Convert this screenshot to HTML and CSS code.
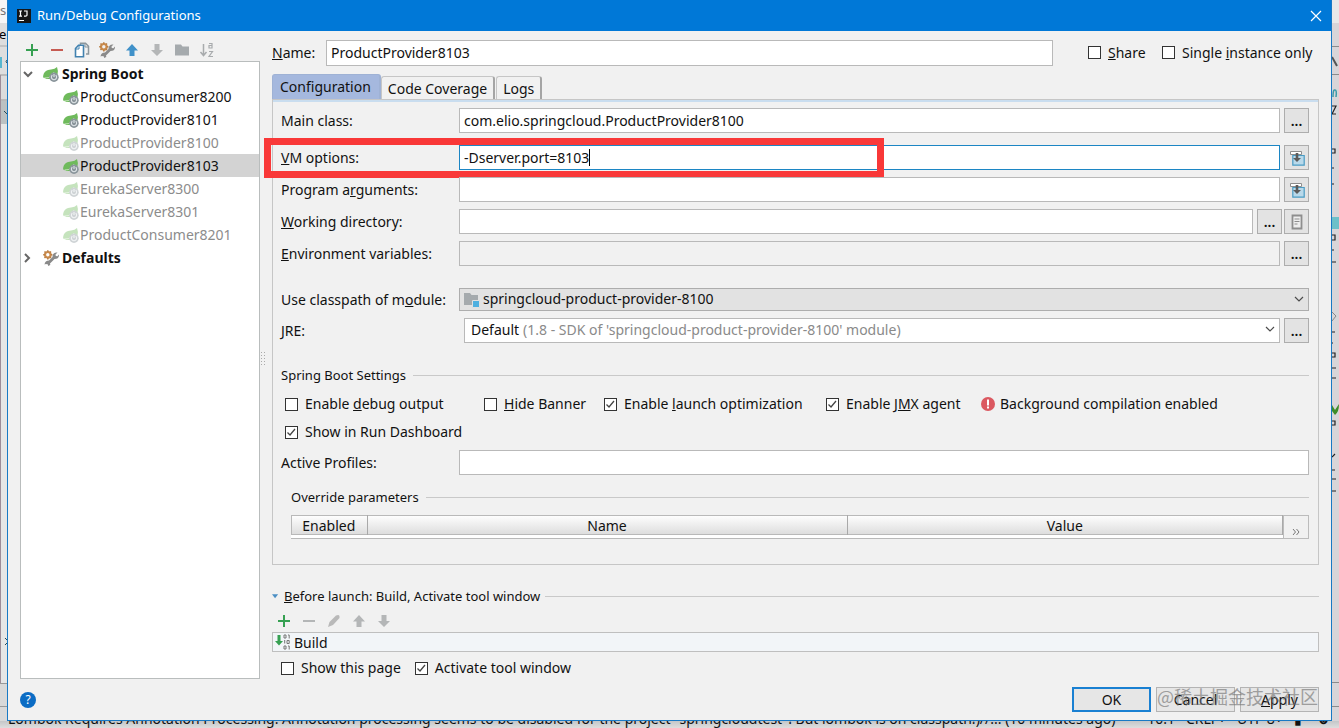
FILE: index.html
```html
<!DOCTYPE html>
<html lang="en">
<head>
<meta charset="utf-8">
<title>Run/Debug Configurations</title>
<link rel="stylesheet" href="styles.css">
</head>
<body>
<svg class="defs" aria-hidden="true">
  <defs>
    <symbol id="i-plus" viewBox="0 0 16 16"><path d="M7 2h2v5h5v2H9v5H7V9H2V7h5z" fill="#36a052"/></symbol>
    <symbol id="i-minus" viewBox="0 0 16 16"><path d="M2 7h12v2H2z" fill="currentColor"/></symbol>
    <symbol id="i-copy" viewBox="0 0 16 16"><path d="M6.500 3V1.200h5l3 3V12H12" fill="none" stroke="#8c979d" stroke-width="1.500"/><path d="M11 1.500v3.500h3.500" fill="none" stroke="#8c979d"/><path d="M1.500 6.500L4.500 3.200h5v11.600h-8z" fill="#fff" stroke="#4282b0" stroke-width="1.600"/><path d="M2 7h3V3.500" fill="none" stroke="#4282b0"/></symbol>
    <symbol id="i-tools" viewBox="0 0 16 16"><path d="M14.500 2.500L12.500 4.500l.3 1.500 1.600.2 1.600-1.700q.3 4.500-4.500 4.500L7 13.500l.3 1.500L5 16v-1.500L3 14l-1.500.5Q2 10.500 6 10.500L9.500 7Q9.500 2 14.500 2.500z" fill="#8a8a8a"/><circle cx="4.800" cy="4.800" r="2.800" fill="none" stroke="#c98a4b" stroke-width="2.200"/><path d="M4.800.2v1.600M4.800 7.800v1.600M.2 4.800h1.600M7.800 4.800h1.600M1.500 1.500l1 1M7 7l1 1M8 1.500l-1 1M1.500 8l1-1" stroke="#b87d43" stroke-width="1.500"/></symbol>
    <symbol id="i-up" viewBox="0 0 16 16"><path d="M8 2l6 6.500h-3.500V14h-5V8.500H2z" fill="currentColor"/></symbol>
    <symbol id="i-down" viewBox="0 0 16 16"><path d="M8 14L2 8h3.500V2h5v6H14z" fill="currentColor"/></symbol>
    <symbol id="i-folder" viewBox="0 0 16 16"><path d="M1 2.500h6l1.500 2H15v9H1z" fill="#a5aaad"/></symbol>
    <symbol id="i-sort" viewBox="0 0 16 16"><path d="M4.500 2v11M1.500 10l3 3.500 3-3.500" fill="none" stroke="#a8abad" stroke-width="1.500"/><path d="M10 1.500h3V6h-3V3.500h3M10 9.500h3.500l-3.500 5h4" fill="none" stroke="#a8abad" stroke-width="1.200"/></symbol>
    <symbol id="i-pencil" viewBox="0 0 16 16"><path d="M2 14l1.500-5L10 2.500Q14 .5 13.500 5L7 12z" fill="#b9b9b9"/></symbol>
    <symbol id="i-boot" viewBox="0 0 16 16"><path d="M0 11.500C.5 5 4 4 8 3.500q4-.5 6-2.500 1.500 4 .5 7.500Q11 13.500 5 13H1q2 0 2-1z" fill="#6fba5c"/><path d="M2 12q7 0 9-6" fill="none" stroke="#c4e5b8"/><circle cx="11" cy="11.200" r="4.700" fill="#8a959b"/><path d="M9.300 9.200a2.600 2.600 0 1 0 3.400 0M11 8v3" fill="none" stroke="#dfe5e8" stroke-width="1.100"/></symbol>
    <symbol id="i-insert" viewBox="0 0 16 16"><path d="M3.800 5.500h11.400v9.700H3.800z" fill="#b9d9ea" stroke="#4a9cc4" stroke-width="1.200"/><path d="M1.500 1.500h11v3h-11z" fill="#fff" stroke="#8d8d8d"/><path d="M8 12L4 8h2.700V3h2.600v5H12z" fill="#5b5b5b"/></symbol>
    <symbol id="i-doc" viewBox="0 0 16 16"><path d="M3.500 1.500h9v13h-9z" fill="#eee" stroke="#8e8e8e" stroke-width="1.800"/><path d="M5.500 5h5M5.500 7.500h5M5.500 10h3" stroke="#8e8e8e"/></symbol>
    <symbol id="i-chev" viewBox="0 0 16 16"><path d="M4 6l4 4 4-4" fill="none" stroke="#4c4c4c" stroke-width="1.200"/></symbol>
  </defs>
</svg>

<div class="desktop">
  <svg class="edge" aria-hidden="true">
    <path d="M0 0h7v23H0z" fill="#f6f6f6"/><path d="M0 23h7v52H0z" fill="#dedede"/><path d="M0 46h7" stroke="#aaa"/>
    <path d="M0 75h7v25H0z" fill="#dcdcdc"/><path d="M0 75h7M0 100h7" stroke="#999"/><path d="M0 101h7v23H0z" fill="#bcc1c2"/>
    <path d="M.5 75v608" stroke="#9d8c98"/><path d="M1 124h6v559H1z" fill="#e6e6e6"/>
    <path d="M0 57h2v11H0z" fill="#58b7cf"/><path d="M0 683.500h7M0 706.500h7" stroke="#999"/>
    <path d="M7 60q-2 2 0 3M4 111l3 3M5 638l2 2M5 645l2-2" stroke="#264b58" fill="none"/>
    <text x="0" y="15" fill="#777">s</text><text x="-1" y="39">e</text>
  </svg>

  <main class="dialog">
    <header class="title-bar">
      <svg class="logo" viewBox="0 0 14 14" aria-hidden="true"><path d="M0 0h14v14H0z" fill="#161616"/><path d="M2 2h3M3.500 2v5M2 7.200h3M7 2h3v4q0 1.200-1.500 1.200H7M2 11.500h5" fill="none" stroke="#fff" stroke-width="1.200"/></svg>
      <h1>Run/Debug Configurations</h1>
      <button class="close" aria-label="Close"><svg viewBox="0 0 12 12"><path d="M1 1l10 10M11 1L1 11" stroke="#fff" stroke-width="1.200"/></svg></button>
    </header>

    <div class="content">
      <aside class="sidebar">
        <div class="toolbar">
          <button aria-label="Add"><svg><use href="#i-plus"/></svg></button>
          <button class="red" aria-label="Remove"><svg><use href="#i-minus"/></svg></button>
          <button aria-label="Copy"><svg><use href="#i-copy"/></svg></button>
          <button aria-label="Edit defaults"><svg><use href="#i-tools"/></svg></button>
          <button class="blue" aria-label="Move up"><svg><use href="#i-up"/></svg></button>
          <button class="grey" aria-label="Move down"><svg><use href="#i-down"/></svg></button>
          <button aria-label="Create folder"><svg><use href="#i-folder"/></svg></button>
          <button aria-label="Sort"><svg><use href="#i-sort"/></svg></button>
        </div>
        <ul class="tree">
          <li class="group"><svg class="twist" viewBox="0 0 10 10"><path d="M1 3l4 4 4-4"/></svg><svg class="icon"><use href="#i-boot"/></svg>Spring Boot</li>
          <li class="leaf"><svg class="icon"><use href="#i-boot"/></svg>ProductConsumer8200</li>
          <li class="leaf"><svg class="icon"><use href="#i-boot"/></svg>ProductProvider8101</li>
          <li class="leaf faded"><svg class="icon"><use href="#i-boot"/></svg>ProductProvider8100</li>
          <li class="leaf selected"><svg class="icon"><use href="#i-boot"/></svg>ProductProvider8103</li>
          <li class="leaf faded"><svg class="icon"><use href="#i-boot"/></svg>EurekaServer8300</li>
          <li class="leaf faded"><svg class="icon"><use href="#i-boot"/></svg>EurekaServer8301</li>
          <li class="leaf faded"><svg class="icon"><use href="#i-boot"/></svg>ProductConsumer8201</li>
          <li class="group"><svg class="twist" viewBox="0 0 10 10"><path d="M2 1l4 4-4 4"/></svg><svg class="icon"><use href="#i-tools"/></svg>Defaults</li>
        </ul>
      </aside>
      <div class="splitter"><i></i></div>

      <section class="editor">
        <div class="name-row">
          <label for="name"><u>N</u>ame:</label>
          <input class="field" id="name" type="text" value="ProductProvider8103">
          <label class="check share"><input type="checkbox"><span><u>S</u>hare</span></label>
          <label class="check single"><input type="checkbox"><span>Single <u>i</u>nstance only</span></label>
        </div>

        <div class="tabs" role="tablist">
          <button class="tab active" role="tab" aria-selected="true">Configuration</button>
          <button class="tab" role="tab">Code Coverage</button>
          <button class="tab" role="tab">Logs</button>
        </div>

        <div class="panel">
          <div class="row main">
            <label for="mainclass">Main class:</label>
            <input class="field" id="mainclass" type="text" value="com.elio.springcloud.ProductProvider8100">
            <button class="side">...</button>
          </div>
          <div class="row vm">
            <label for="vm"><u>V</u>M options:</label>
            <div class="wrap"><input class="field focus" id="vm" type="text" value="-Dserver.port=8103"><div class="caret-line"><span aria-hidden="true">-Dserver.port=8103</span></div></div>
            <button class="side pic" aria-label="Expand VM options"><svg><use href="#i-insert"/></svg></button>
            <div class="highlight"></div>
          </div>
          <div class="row">
            <label for="args">Program a<u>r</u>guments:</label>
            <input class="field" id="args" type="text">
            <button class="side pic" aria-label="Expand program arguments"><svg><use href="#i-insert"/></svg></button>
          </div>
          <div class="row">
            <label for="wd"><u>W</u>orking directory:</label>
            <input class="field" id="wd" type="text">
            <div class="pair"><button class="side">...</button><button class="side pic" aria-label="Insert macro"><svg><use href="#i-doc"/></svg></button></div>
          </div>
          <div class="row">
            <label for="env"><u>E</u>nvironment variables:</label>
            <input class="field off" id="env" type="text" readonly>
            <button class="side">...</button>
          </div>
          <div class="row module">
            <label for="module">Use classpath of m<u>o</u>dule:</label>
            <div class="wrap">
              <select class="field combo" id="module"><option>springcloud-product-provider-8100</option></select>
              <svg class="module-icon" viewBox="0 0 16 16"><path d="M0 1h6l1.500 2H14v10H0z" fill="#a5aaad"/><path d="M8.500 8.500h7v7h-7z" fill="#4fb0e0" stroke="#e1e1e1"/></svg>
              <svg class="arrow"><use href="#i-chev"/></svg>
            </div>
          </div>
          <div class="row jre">
            <label for="jre"><u>J</u>RE:</label>
            <div class="wrap">
              <select class="field" id="jre"><option>Default</option></select>
              <div class="hint"><b>Default</b><span>(1.8 - SDK of 'springcloud-product-provider-8100' module)</span></div>
              <svg class="arrow"><use href="#i-chev"/></svg>
            </div>
            <button class="side">...</button>
          </div>

          <h2 class="rule">Spring Boot Settings</h2>
          <div class="checks options">
            <label class="check"><input type="checkbox"><span>Enable <u>d</u>ebug output</span></label>
            <label class="check"><input type="checkbox"><span><u>H</u>ide Banner</span></label>
            <label class="check"><input type="checkbox" checked><span>Enable <u>l</u>aunch optimization</span></label>
            <label class="check"><input type="checkbox" checked><span>Enable J<u>M</u>X agent</span></label>
            <div class="warning"><svg viewBox="0 0 14 14"><circle cx="7" cy="7" r="7" fill="#db5860"/><path d="M6 2.500h2v6H6zM6 9.500h2v2H6z" fill="#fff"/></svg>Background compilation enabled</div>
          </div>
          <div class="checks second">
            <label class="check"><input type="checkbox" checked><span>Show in Run Dashboard</span></label>
          </div>
          <div class="row profiles">
            <label for="profiles">Active Profiles:</label>
            <input class="field" id="profiles" type="text">
          </div>
          <h2 class="rule override">Override parameters</h2>
          <div class="params">
            <table>
              <colgroup><col class="c-enabled"><col class="c-name"><col></colgroup>
              <thead><tr><th>Enabled</th><th>Name</th><th>Value</th></tr></thead>
            </table>
            <button class="more" aria-label="More"><svg viewBox="0 0 8 6"><path d="M1 0l2.500 3L1 6M4.500 0L7 3 4.500 6" fill="none" stroke="#777"/></svg></button>
          </div>
        </div>

        <h2 class="rule before"><svg viewBox="0 0 8 5"><path d="M0 0h7L3.500 4.500z" fill="#4b8fc4"/></svg><span><u>B</u>efore launch: Build, Activate tool window</span></h2>
        <div class="toolbar small">
          <button aria-label="Add task"><svg><use href="#i-plus"/></svg></button>
          <button class="grey" aria-label="Remove task"><svg><use href="#i-minus"/></svg></button>
          <button aria-label="Edit task"><svg><use href="#i-pencil"/></svg></button>
          <button class="grey" aria-label="Task up"><svg><use href="#i-up"/></svg></button>
          <button class="grey" aria-label="Task down"><svg><use href="#i-down"/></svg></button>
        </div>
        <div class="task"><svg viewBox="0 0 16 16"><path d="M2.500 1h3v6H8l-4 4.500L0 7h2.500z" fill="#36a052"/><path d="M9 1h2v3H9zM13 1h1.200v3.500M9.700 6v3.500M12 6.500h2.200v3H12zM9 12h2v3H9zM13 12h1.200v3.500" fill="none" stroke="#777"/></svg>Build</div>
        <div class="checks last">
          <label class="check"><input type="checkbox"><span>Show this page</span></label>
          <label class="check"><input type="checkbox" checked><span>Activate tool window</span></label>
        </div>
      </section>
    </div>

    <footer class="footer">
      <button class="help" aria-label="Help">?</button>
      <button class="push primary">OK</button>
      <button class="push">Cancel</button>
      <button class="push"><u>A</u>pply</button>
      <div class="watermark">@稀土掘金技术社区</div>
    </footer>
  </main>

  <svg class="edge right" aria-hidden="true">
    <path d="M0 0h7v23H0z" fill="#e9e9e9"/><path d="M0 46.500h7M0 74.500h7M0 682.500h7M0 706.500h7" stroke="#8b8b8b"/>
    <path d="M0 57l5 9" stroke="#555" stroke-width="2"/><path d="M1 97q0-8 2-7 2 0 1 7" fill="none" stroke="#3d9aa8" stroke-width="1.500"/>
    <path d="M0 217h7v12H0z" fill="#6cc0c9"/><path d="M0 106h4l-4 8h4M0 149h3v4H0M0 168h2M0 184h2M0 235h3v5H0M0 250h2M0 262h4M0 332h3M0 343h1M0 353h3v4H0M0 368h4M0 378h4M0 421h3v4H0M0 457l3-3M0 470h3M0 479h4M0 491h4" fill="none" stroke="#222" stroke-width="1.200"/>
    <path d="M0 405l3 5 4-6q0 8-4 11L0 411z" fill="#3e8c28"/><path d="M0 312l4 4-4 5" fill="none" stroke="#888"/>
  </svg>

  <div class="status" aria-hidden="true"><span>Lombok Requires Annotation Processing: Annotation processing seems to be disabled for the project "springcloudtest"! But lombok is on classpath!)//... (10 minutes ago)</span><span>10:1&nbsp;&nbsp; CRLF÷&nbsp;&nbsp; UTF-8÷&nbsp;&nbsp; &#9646;&nbsp;&nbsp;&nbsp; &#9787;</span></div>
</div>
</body>
</html>
```
FILE: styles.css
```css
* { box-sizing: border-box; }

body {
  margin: 0;
  font: 14px/20px "Noto Sans", "Open Sans", sans-serif;
  color: #111;
}

button, input, select { font: inherit; color: inherit; margin: 0; }
button { padding: 0; border: 0; background: none; }
h1, h2 { margin: 0; font-weight: 400; }
.defs { position: absolute; width: 0; height: 0; }

.desktop {
  display: grid;
  grid-template-columns: 7px 1fr 7px;
  grid-template-rows: 1fr 7px;
  min-height: 100vh;
  background: #d6d6d8;
}

.edge { width: 7px; height: 100%; min-height: 0; background: #d9d9d9; font-size: 13px; }
.edge.right { background: #d8d5d8; }

.status {
  grid-column: 1 / -1;
  display: flex;
  justify-content: space-between;
  align-items: flex-end;
  height: 7px;
  padding: 0 8px;
  overflow: hidden;
  white-space: nowrap;
  line-height: 18px;
  background: linear-gradient(#c4c6c8, #dedede);
}

/* Dialog */
.dialog {
  display: flex;
  flex-direction: column;
  min-width: 0;
  border: 1px solid #1979c4;
  border-top: 0;
  background: #f1f1f1;
}

.title-bar {
  display: flex;
  align-items: center;
  gap: 6px;
  height: 31px;
  padding: 0 9px;
  background: #0078d7;
  color: #fff;
}
.title-bar h1 { flex: 1; padding-bottom: 1px; font-size: 13px; }
.logo { width: 14px; height: 14px; }
.close { display: flex; }
.close svg { width: 12px; height: 12px; }

.content { display: flex; flex: 1; padding: 8px 12px 0; }

/* Sidebar */
.sidebar { display: flex; flex-direction: column; width: 240px; }
.toolbar { display: flex; gap: 9px; height: 22px; padding: 3px 4px; }
.toolbar button { display: flex; }
.toolbar svg, .icon { width: 16px; height: 16px; }
.red { color: #c65b52; }
.blue { color: #4091c9; }
.grey { color: #b4b6b7; }

.tree {
  flex: 1;
  margin: 0;
  padding: 0;
  list-style: none;
  background: #fff;
  border: 1px solid #b9bdbd;
}
.tree li { display: flex; align-items: center; height: 23px; white-space: nowrap; }
.group { gap: 3px; padding-left: 2px; font-weight: 700; }
.twist { width: 10px; height: 10px; margin-right: 7px; fill: none; stroke: #666; stroke-width: 2; }
.leaf { gap: 1px; padding-left: 42px; }
.faded { color: #8c8c8c; }
.faded .icon { opacity: .4; }
.selected { background: #d3d3d3; }

.splitter { display: flex; align-items: center; width: 12px; }
.splitter i { width: 5px; height: 16px; background: radial-gradient(circle, #aaa 1px, #f1f1f1 1px) 0 0 / 3px 3px; }

/* Editor */
.editor { flex: 1; min-width: 0; }
.name-row { display: flex; align-items: center; height: 27px; }
.name-row > label:first-child { width: 54px; }
.name-row .field { flex: 1; width: 0; height: 26px; margin-right: 35px; }
.share { width: 74px; }
.single { width: 157px; }

.field {
  width: 100%;
  height: 25px;
  padding: 0 4px;
  border: 1px solid #b9b9b9;
  border-radius: 0;
  background: #fff;
  outline: 0;
}
.focus { border-color: #1c86c4; }
.off { background: #f1f1f1; }

.check { display: flex; align-items: center; gap: 7px; white-space: nowrap; }
.check input {
  flex: none;
  appearance: none;
  width: 13px;
  height: 13px;
  border: 1px solid #333;
  background: #fff;
}
.check input:checked {
  background: #fff url("data:image/svg+xml,%3Csvg xmlns='http://www.w3.org/2000/svg' viewBox='0 0 11 11'%3E%3Cpath d='M1.500 5.500l2.500 2.500 5-6' fill='none' stroke='%23444' stroke-width='1.300'/%3E%3C/svg%3E") center / 11px 11px;
}

.tabs { display: flex; align-items: flex-end; height: 33px; }
.tab {
  height: 23px;
  margin-right: 1px;
  padding: 1px 6px 0;
  border: 1px solid #c6c6c6;
  border-right: 2px solid #a5a5a5;
  border-bottom: 0;
  border-radius: 3px 3px 0 0;
  white-space: nowrap;
  line-height: 20px;
}
.tab.active { height: 25px; margin: 0; padding: 0 8px 0 7px; border-color: #9fb2d5; background: #a5b8de; }

.panel {
  padding: 6px 9px 25px 8px;
  border: 1px solid #c6c6c6;
  box-shadow: inset 0 2px #c9ddef;
}
.row { display: flex; align-items: center; gap: 4px; margin-bottom: 7px; position: relative; }
.row > label { flex: none; width: 174px; white-space: nowrap; }
.main { margin: 2px 0 12px; }
.wrap { position: relative; flex: 1; display: flex; }
.side {
  flex: none;
  width: 25px;
  height: 25px;
  border: 1px solid #adadad;
  background: #e3e3e3;
  font-weight: 600;
}
.pic { display: flex; align-items: center; justify-content: center; }
.pic svg { width: 16px; height: 16px; }
.pair { display: flex; gap: 2px; }
.caret-line { position: absolute; left: 5px; top: 4px; height: 17px; border-right: 1px solid #000; pointer-events: none; }
.caret-line span { visibility: hidden; }
.highlight {
  position: absolute;
  left: -17px;
  top: -7px;
  width: 620px;
  height: 40px;
  border: 7px solid #f93838;
  pointer-events: none;
}

.module { margin-top: 22px; }
select.field { appearance: none; }
.combo { height: 23px; padding: 0 4px 2px 23px; background: #e2e2e2; border-color: #adadad; }
.module-icon { position: absolute; left: 5px; top: 4px; width: 16px; height: 16px; }
.arrow { position: absolute; right: 2px; top: 3px; width: 16px; height: 16px; }
.jre .wrap { margin-left: 5px; }
.jre select { color: transparent; }
.hint {
  position: absolute;
  inset: 2px 20px 2px 7px;
  display: flex;
  gap: 4px;
  overflow: hidden;
  white-space: nowrap;
  pointer-events: none;
}
.hint b { font-weight: 400; }
.hint span { color: #8a8a8a; }

.rule { display: flex; align-items: center; gap: 7px; font-size: 13px; line-height: 20px; white-space: nowrap; }
.rule::after { content: ""; flex: 1; height: 1px; background: #c9c9c9; }
.panel .rule { margin-top: 22px; }

.checks { display: flex; align-items: center; gap: 14px; height: 28px; padding-left: 4px; }
.options { display: grid; grid-template-columns: 199px 120px 222px 155px 1fr; gap: 0; margin-top: 5px; }
.warning { display: flex; align-items: center; gap: 5px; white-space: nowrap; }
.warning svg { width: 14px; height: 14px; }
.profiles { margin-top: 4px; }
.panel .override { margin: 12px 0 0 10px; }

.params { display: flex; margin: 8px 0 0 10px; height: 24px; }
.params table {
  flex: 1;
  width: 0;
  height: 20px;
  table-layout: fixed;
  border-collapse: collapse;
  box-shadow: inset 0 0 0 1px #b9b9b9, 0 3px #fff, 0 4px #b9b9b9;
  background: linear-gradient(#fff, #dcdcdc);
}
.c-enabled { width: 76px; }
.c-name { width: 480px; }
.params th { padding: 1px 0 0; font-weight: 400; line-height: 19px; border-right: 1px solid #a9a9a9; }
.more { width: 26px; border: 1px solid #bcbcbc; padding-top: 5px; line-height: 12px; }
.more svg { width: 8px; height: 6px; }

.before { gap: 5px; margin-top: 21px; }
.before svg { width: 7px; height: 5px; }
.small { height: 26px; padding: 7px 4px 3px; }
.small svg { width: 16px; height: 16px; }
.task { display: flex; align-items: center; gap: 3px; height: 20px; padding: 2px 0 0 2px; border: 1px solid #bfbfbf; background: #f2f5f8; }
.task svg { width: 16px; height: 16px; margin-bottom: 2px; }
.last { height: 22px; margin-top: 5px; padding-left: 9px; }

/* Footer */
.footer { display: flex; align-items: center; gap: 5px; padding: 8px 12px; position: relative; }
.help { width: 16px; height: 16px; margin-right: auto; border-radius: 50%; background: #0b6cc4; color: #fff; line-height: 16px; font-size: 12px; }
.push { width: 79px; height: 25px; border: 1px solid #b4b4b4; background: #e6e6e6; }
.primary { border: 2px solid #1980d2; }
.watermark {
  position: absolute;
  right: 13px;
  top: 4px;
  font: 18px/26px "Noto Sans CJK SC", sans-serif;
  color: #777;
  opacity: .65;
  pointer-events: none;
}
```
